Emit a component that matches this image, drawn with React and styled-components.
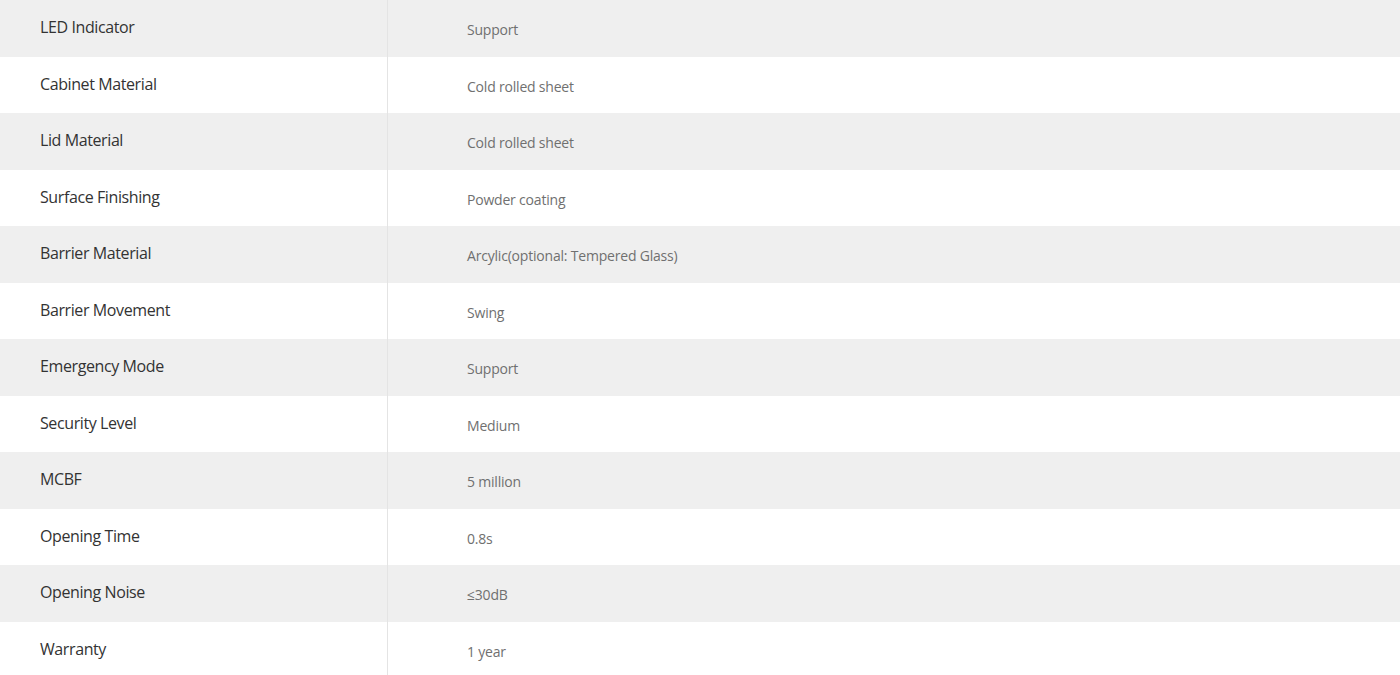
import React from 'react';
import styled, { createGlobalStyle } from 'styled-components';

const GlobalStyle = createGlobalStyle`
  html, body {
    margin: 0;
    padding: 0;
    background: #fff;
  }
`

const Table = styled.div`
  width: 1400px;
  display: flex;
  flex-direction: column;
`

const Row = styled.div`
  display: grid;
  grid-template-columns: 388px 1fr;
  height: 56.5px;
  background: ${props => props.striped ? '#efefef' : '#fff'};
`

const Label = styled.div`
  display: flex;
  align-items: center;
  padding-left: 40px;
  padding-bottom: 2px;
  border-right: 1px solid #e4e4e4;
  font-family: "Open Sans", "Noto Sans", sans-serif;
  font-size: 16px;
  letter-spacing: -0.4px;
  color: #333;
`

const Value = styled.div`
  display: flex;
  align-items: center;
  padding-left: 79px;
  padding-top: 3px;
  font-family: "Open Sans", "Noto Sans", sans-serif;
  font-size: 14px;
  letter-spacing: -0.2px;
  color: #707070;
`

const specs = [
  ['LED Indicator', 'Support'],
  ['Cabinet Material', 'Cold rolled sheet'],
  ['Lid Material', 'Cold rolled sheet'],
  ['Surface Finishing', 'Powder coating'],
  ['Barrier Material', 'Arcylic(optional: Tempered Glass)'],
  ['Barrier Movement', 'Swing'],
  ['Emergency Mode', 'Support'],
  ['Security Level', 'Medium'],
  ['MCBF', '5 million'],
  ['Opening Time', '0.8s'],
  ['Opening Noise', '≤30dB'],
  ['Warranty', '1 year'],
]

function App() {
  return (
    <>
      <GlobalStyle />
      <Table>
        {specs.map(([label, value], i) => (
          <Row key={label} striped={i % 2 === 0}>
            <Label>{label}</Label>
            <Value>{value}</Value>
          </Row>
        ))}
      </Table>
    </>
  )
}

export default App;
